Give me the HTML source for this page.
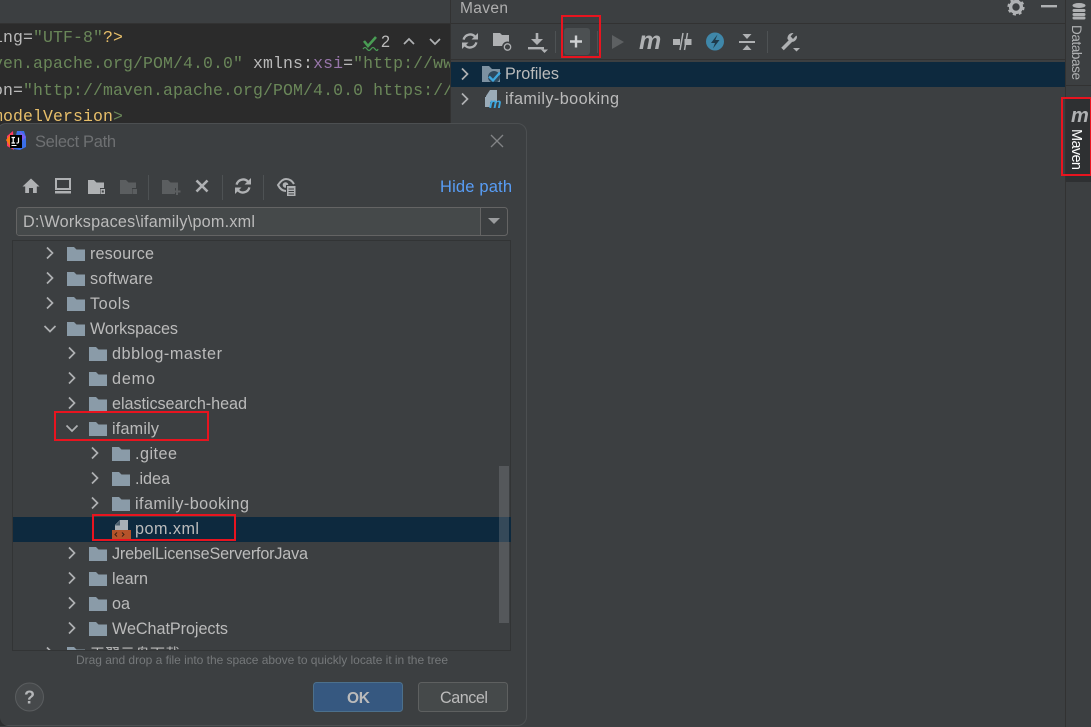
<!DOCTYPE html>
<html><head><meta charset="utf-8"><style>
html,body{margin:0;padding:0;background:#3c3f41;width:1091px;height:727px;overflow:hidden}
svg{display:block;fill:#bbbbbb}
text{font-family:"Liberation Sans","Noto Sans CJK SC",sans-serif;font-size:16.2px}
.c text{font-family:"Liberation Mono",monospace;font-size:16.5px;letter-spacing:.1px}
</style></head><body>
<svg width="1091" height="727" viewBox="0 0 1091 727" xmlns="http://www.w3.org/2000/svg">
<defs>
<symbol id="fo" viewBox="0 0 18 14" width="18" height="14"><path d="M0 0H7L9.5 2.5H18V14H0Z" fill="#8a9ba8"/></symbol>
<symbol id="re" viewBox="0 0 18 18" width="18" height="18"><g fill="none" stroke="#afb1b3" stroke-width="2.3"><path d="M2.6 7.6A6.7 6.7 0 0 1 14 4.6"/><path d="M15.4 10.4A6.7 6.7 0 0 1 4 13.4"/></g><path d="M10.5 7.5H17V1Z" fill="#afb1b3"/><path d="M7.5 10.5H1V17Z" fill="#afb1b3"/></symbol>
</defs>
<rect width="1091" height="727" fill="#3c3f41"/>
<!-- editor -->
<rect x="0" y="23" width="451" height="1" fill="#323232"/>
<rect x="0" y="24" width="450" height="101" fill="#2b2b2b"/>
<g class="c">
<text x="-7" y="42"><tspan fill="#bababa">ing=</tspan><tspan fill="#6a8759">"UTF-8"</tspan><tspan fill="#e8bf6a">?&gt;</tspan></text>
<text x="-7" y="68"><tspan fill="#6a8759">ven.apache.org/POM/4.0.0"</tspan><tspan fill="#bababa"> xmlns:</tspan><tspan fill="#9876aa">xsi</tspan><tspan fill="#bababa">=</tspan><tspan fill="#6a8759">"http://ww</tspan></text>
<text x="-7" y="95"><tspan fill="#bababa">on=</tspan><tspan fill="#6a8759">"http://maven.apache.org/POM/4.0.0 https://</tspan></text>
<text x="-7" y="121"><tspan fill="#e8bf6a">modelVersion</tspan><tspan fill="#6a8759">&gt;</tspan></text>
</g>
<rect x="450" y="24" width="641" height="101" fill="#3c3f41"/>
<path d="M364 41L368 46L376 37" fill="none" stroke="#499c54" stroke-width="2.6"/>
<path d="M363 49q2-3 4 0t4 0t4 0t3 0" fill="none" stroke="#499c54" stroke-width="1.2"/>
<text x="381" y="47" fill="#bbbbbb" textLength="10">2</text>
<path d="M404 44L409 39L414 44M430 39L435 44L440 39" fill="none" stroke="#afb1b3" stroke-width="1.7"/>

<!-- maven panel -->
<rect x="450" y="0" width="1" height="125" fill="#323232"/>
<rect x="451" y="23" width="614" height="1" fill="#323232"/>
<text x="460" y="13" textLength="48" style="font-size:15.5px" fill="#b0b0b0">Maven</text>
<g fill="#afb1b3">
<circle cx="1016" cy="7" r="5.4" fill="none" stroke="#afb1b3" stroke-width="3.4"/>
<circle cx="1016" cy="7" r="7.4" fill="none" stroke="#afb1b3" stroke-width="2.4" stroke-dasharray="3 2.8"/>
<rect x="1041" y="5" width="16" height="2.4"/>
</g>
<rect x="451" y="59" width="614" height="1" fill="#323232"/>
<use href="#re" x="461" y="32"/>
<path d="M493 33H500L502 35H509V46H493Z" fill="#afb1b3"/>
<circle cx="507.5" cy="47" r="5.5" fill="#3c3f41"/>
<circle cx="507.5" cy="47" r="3.2" fill="none" stroke="#afb1b3" stroke-width="1.3"/>
<g fill="#afb1b3">
<path d="M535.7 33H538.3V39H543L537 45L531 39H535.7Z"/>
<rect x="528" y="47" width="16" height="2.4"/>
<path d="M541 49.5H548L544.5 53Z"/>
</g>
<rect x="555" y="31" width="1" height="22" fill="#4e5254"/>
<rect x="564" y="28" width="26" height="27" rx="3" fill="#4c5052"/>
<path d="M576 35.5V47.5M570 41.5H582" stroke="#cfd1d3" stroke-width="2.4" fill="none"/>
<rect x="597" y="31" width="1" height="22" fill="#4e5254"/>
<path d="M612 35L624 42L612 49Z" fill="#5d6062"/>
<text x="639" y="49" style="font-size:25px;font-weight:bold;font-style:italic" fill="#afb1b3" textLength="23">m</text>
<g fill="#afb1b3"><rect x="673" y="39" width="7" height="6"/><rect x="684.5" y="39" width="7" height="6"/></g>
<path d="M680 50L683 33M684.5 50L687.5 33" stroke="#afb1b3" stroke-width="1.5" fill="none"/>
<circle cx="715" cy="41.5" r="9" fill="#3f87a9"/>
<path d="M717.5 34.5L711 43H715L713 48.5L719.5 40H715.3Z" fill="#1e3a4a"/>
<g fill="#afb1b3"><rect x="739" y="41" width="16" height="2"/><path d="M742.5 34H751.5L747 39Z"/><path d="M742.5 50H751.5L747 45Z"/></g>
<rect x="767" y="31" width="1" height="22" fill="#4e5254"/>
<path d="M782.5 49L791 40.5" stroke="#afb1b3" stroke-width="3.6" fill="none"/>
<path d="M797 36.5A5.3 5.3 0 0 1 789.8 41.6L787.5 39A5.3 5.3 0 0 1 793.5 33L790.6 36.4L793 39L796.3 35.5Z" fill="#afb1b3"/>
<path d="M793 48H800L796.5 51.5Z" fill="#afb1b3"/>

<rect x="451" y="62" width="614" height="25" fill="#0d293e"/>
<path d="M462 68.5L467.5 74L462 79.5M462 93.5L467.5 99L462 104.500" fill="none" stroke="#afb1b3" stroke-width="1.7"/>
<path d="M482 66H489L492 69H500V82H482Z" fill="#7c91a1"/>
<circle cx="494" cy="77" r="6" fill="#0d293e" opacity=".7"/>
<path d="M489 76.500L493 80.500L500 72.500" fill="none" stroke="#3ea6dd" stroke-width="2.3"/>
<text x="505" y="79" textLength="54">Profiles</text>
<path d="M490 90H497V102H486V96Z" fill="#9aabb8"/>
<path d="M485 97H490V107H485Z" fill="#9aabb8"/>
<text x="489" y="108" style="font-size:14px;font-weight:bold;font-style:italic" fill="#3ea6dd" textLength="13">m</text>
<text x="505" y="104" textLength="114">ifamily-booking</text>

<!-- right stripe -->
<rect x="1065" y="0" width="26" height="727" fill="#3c3f41"/>
<rect x="1065" y="0" width="1" height="727" fill="#323232"/>
<g fill="#afb1b3"><ellipse cx="1079" cy="5.500" rx="6.500" ry="2.500"/><rect x="1072.500" y="9" width="13" height="3" rx="1.500"/><rect x="1072.500" y="13" width="13" height="3" rx="1.500"/><rect x="1072.500" y="16.500" width="13" height="3" rx="1.500"/></g>
<text transform="translate(1072 25) rotate(90)" x="0" y="0" textLength="55" style="font-size:13.5px" fill="#afb1b3">Database</text>
<rect x="1066" y="85" width="25" height="1" fill="#323232"/>
<rect x="1066" y="98" width="25" height="84" fill="#2e3032"/>
<text x="1071" y="122" style="font-size:20px;font-weight:bold;font-style:italic" fill="#afb1b3" textLength="16">m</text>
<text transform="translate(1072 129) rotate(90)" x="0" y="0" textLength="41" style="font-size:14.500px" fill="#ffffff">Maven</text>

<!-- dialog -->
<rect x="-3" y="123.500" width="529.500" height="602" rx="9" fill="#3c3f41" stroke="#4c4f51" stroke-width="1"/>
<path d="M0 718Q1 725 8 726H0Z" fill="#2d2f30"/>
<!-- IJ logo -->
<path d="M7 136L13 131L14 150L7 146Z" fill="#fd3a64"/>
<path d="M6 140L11 134L11 148Z" fill="#f97a12"/>
<path d="M17 131H24L26 137V147L20 150L13 149Z" fill="#3a6ee8"/>
<path d="M20 131L26 137L22 141Z" fill="#7a5cf0"/>
<rect x="10" y="135" width="12" height="13" fill="#000"/>
<path d="M11.500 137.500H15M13.200 137.500V143M11.500 143H15M18.500 137.500V142Q18.500 143.300 16.500 143" stroke="#fff" stroke-width="1.200" fill="none"/>
<rect x="11.500" y="145" width="5" height="1" fill="#fff"/>
<text x="35" y="147" textLength="81" style="font-size:16.500px" fill="#6e7072">Select Path</text>
<path d="M491 135L503 147M503 135L491 147" stroke="#828486" stroke-width="1.300" fill="none"/>

<!-- dialog toolbar -->
<path d="M31 178.500L39.500 186.500H36.800V193H33V188H29V193H25.200V186.500H22.500Z" fill="#afb1b3"/>
<rect x="56" y="179" width="14" height="10" fill="none" stroke="#afb1b3" stroke-width="2"/>
<rect x="55" y="191" width="16" height="2.500" fill="#afb1b3"/>
<path d="M88 180H94L96.500 182.500H104V188H100V194H88Z" fill="#afb1b3"/>
<rect x="100.500" y="189" width="4.500" height="5" fill="#afb1b3"/><rect x="101.800" y="190.500" width="2" height="2" fill="#3c3f41"/>
<path d="M120 180H126L128.500 182.500H136V188H132V194H120Z" fill="#5b5e60"/>
<rect x="132.500" y="189" width="4.500" height="5" fill="#5b5e60"/>
<rect x="148" y="175" width="1" height="25" fill="#4e5254"/>
<path d="M162 180H168L170.500 182.500H178V188H175V194H162Z" fill="#5b5e60"/>
<path d="M177 188V195M173.500 191.500H180.500" stroke="#5b5e60" stroke-width="2" fill="none"/>
<path d="M196.500 180.500L207.500 191.500M207.500 180.500L196.500 191.500" stroke="#afb1b3" stroke-width="2.600" fill="none"/>
<rect x="222" y="175" width="1" height="25" fill="#4e5254"/>
<use href="#re" x="234" y="177"/>
<rect x="263" y="175" width="1" height="25" fill="#4e5254"/>
<path d="M286 191Q281 191 278 185Q282 179 286 179Q291 179 294 184" fill="none" stroke="#afb1b3" stroke-width="2"/>
<circle cx="285.500" cy="185" r="2.800" fill="#afb1b3"/>
<rect x="286" y="185" width="10" height="12" fill="#3c3f41"/>
<rect x="287" y="186" width="8.500" height="10" fill="#afb1b3"/>
<path d="M288.500 189H294M288.500 191.500H294M288.500 194H294" stroke="#3c3f41" stroke-width="1"/>
<text x="440" y="192" textLength="72" style="font-size:16.500px" fill="#589df6">Hide path</text>

<!-- path -->
<rect x="16.500" y="207.500" width="491" height="28" rx="3" fill="#3c3f41" stroke="#646464"/>
<rect x="17" y="208" width="464" height="27" rx="2" fill="#45494a"/>
<rect x="480" y="208" width="1" height="27" fill="#646464"/>
<path d="M488 218H500L494 224Z" fill="#9a9c9e"/>
<text x="23" y="227" textLength="232">D:\Workspaces\ifamily\pom.xml</text>

<!-- tree -->
<rect x="12.500" y="240.500" width="498" height="410" fill="#3c3f41" stroke="#323435"/>
<rect x="13" y="517" width="498" height="25" fill="#0d293e"/>
<g fill="none" stroke="#afb1b3" stroke-width="1.700">
<path d="M47 247.500L52.500 253L47 258.500M47 272.500L52.500 278L47 283.500M47 297.500L52.500 303L47 308.500M44.500 326L50 331.500L55.500 326"/>
<path d="M69 347.500L74.500 353L69 358.500M69 372.500L74.500 378L69 383.500M69 397.500L74.500 403L69 408.500M66.500 425.500L72 431L77.500 425.500"/>
<path d="M92 447.500L97.500 453L92 458.500M92 472.500L97.500 478L92 483.500M92 497.500L97.500 503L92 508.500"/>
<path d="M69 547.500L74.500 553L69 558.500M69 572.500L74.500 578L69 583.500M69 597.500L74.500 603L69 608.500M69 622.500L74.500 628L69 633.500"/>
</g>
<use href="#fo" x="67" y="247"/><use href="#fo" x="67" y="272"/><use href="#fo" x="67" y="297"/><use href="#fo" x="67" y="322"/>
<use href="#fo" x="89" y="347"/><use href="#fo" x="89" y="372"/><use href="#fo" x="89" y="397"/><use href="#fo" x="89" y="422"/>
<use href="#fo" x="112" y="447"/><use href="#fo" x="112" y="472"/><use href="#fo" x="112" y="497"/>
<use href="#fo" x="89" y="547"/><use href="#fo" x="89" y="572"/><use href="#fo" x="89" y="597"/><use href="#fo" x="89" y="622"/>
<text x="90" y="259" textLength="64">resource</text>
<text x="90" y="284" textLength="63">software</text>
<text x="90" y="309" textLength="40">Tools</text>
<text x="90" y="334" textLength="88">Workspaces</text>
<text x="112" y="359" textLength="110">dbblog-master</text>
<text x="112" y="384" textLength="43">demo</text>
<text x="112" y="409" textLength="135">elasticsearch-head</text>
<text x="112" y="434" textLength="47">ifamily</text>
<text x="135" y="459" textLength="42">.gitee</text>
<text x="135" y="484" textLength="35">.idea</text>
<text x="135" y="509" textLength="114">ifamily-booking</text>
<text x="135" y="534" textLength="64">pom.xml</text>
<text x="112" y="559" textLength="196">JrebelLicenseServerforJava</text>
<text x="112" y="584" textLength="36">learn</text>
<text x="112" y="609" textLength="18">oa</text>
<text x="112" y="634" textLength="116">WeChatProjects</text>
<!-- pom icon -->
<path d="M120 520H128V530H115V525Z" fill="#a9b0b6"/>
<path d="M115 525.500L120 520.500V525.500Z" fill="#0d293e" opacity=".6"/>
<rect x="112" y="530" width="19" height="9" fill="#b5532a"/>
<path d="M117 532.500L115 534.500L117 536.500M122 532.500L124 534.500L122 536.500" stroke="#3c2012" stroke-width="1" fill="none"/>
<!-- clipped row -->
<svg x="13" y="641" width="498" height="9" viewBox="13 641 498 9">
<path d="M47 647.500L52.500 653L47 658.500" fill="none" stroke="#afb1b3" stroke-width="1.700"/>
<use href="#fo" x="67" y="647"/>
<text x="90" y="659" style="font-size:15px">天翼云盘下载</text>
</svg>
<rect x="499" y="466" width="10" height="157" fill="#8c8f91" opacity=".32"/>
<text x="76" y="664" textLength="372" style="font-size:12px" fill="#75787a">Drag and drop a file into the space above to quickly locate it in the tree</text>

<!-- buttons -->
<circle cx="29.500" cy="697" r="14" fill="#46494b" stroke="#5a5d5f"/>
<text x="29.500" y="703.500" text-anchor="middle" style="font-size:18px;font-weight:bold" fill="#b4b6b8">?</text>
<rect x="313.500" y="682.500" width="89" height="29" rx="3" fill="#365880" stroke="#4c708c"/>
<text x="347" y="703" textLength="23" style="font-size:15.500px;font-weight:bold" fill="#bbbbbb">OK</text>
<rect x="418.500" y="682.500" width="89" height="29" rx="3" fill="#45494a" stroke="#5e6060"/>
<text x="440" y="703" textLength="48">Cancel</text>

<!-- red annotation boxes -->
<g fill="none" stroke="#e8141f" stroke-width="2">
<rect x="562" y="16" width="38" height="41"/>
<rect x="1062" y="98" width="29" height="77"/>
<rect x="55" y="412" width="153" height="28"/>
<rect x="93" y="515" width="142" height="25"/>
</g>
</svg>
</body></html>
